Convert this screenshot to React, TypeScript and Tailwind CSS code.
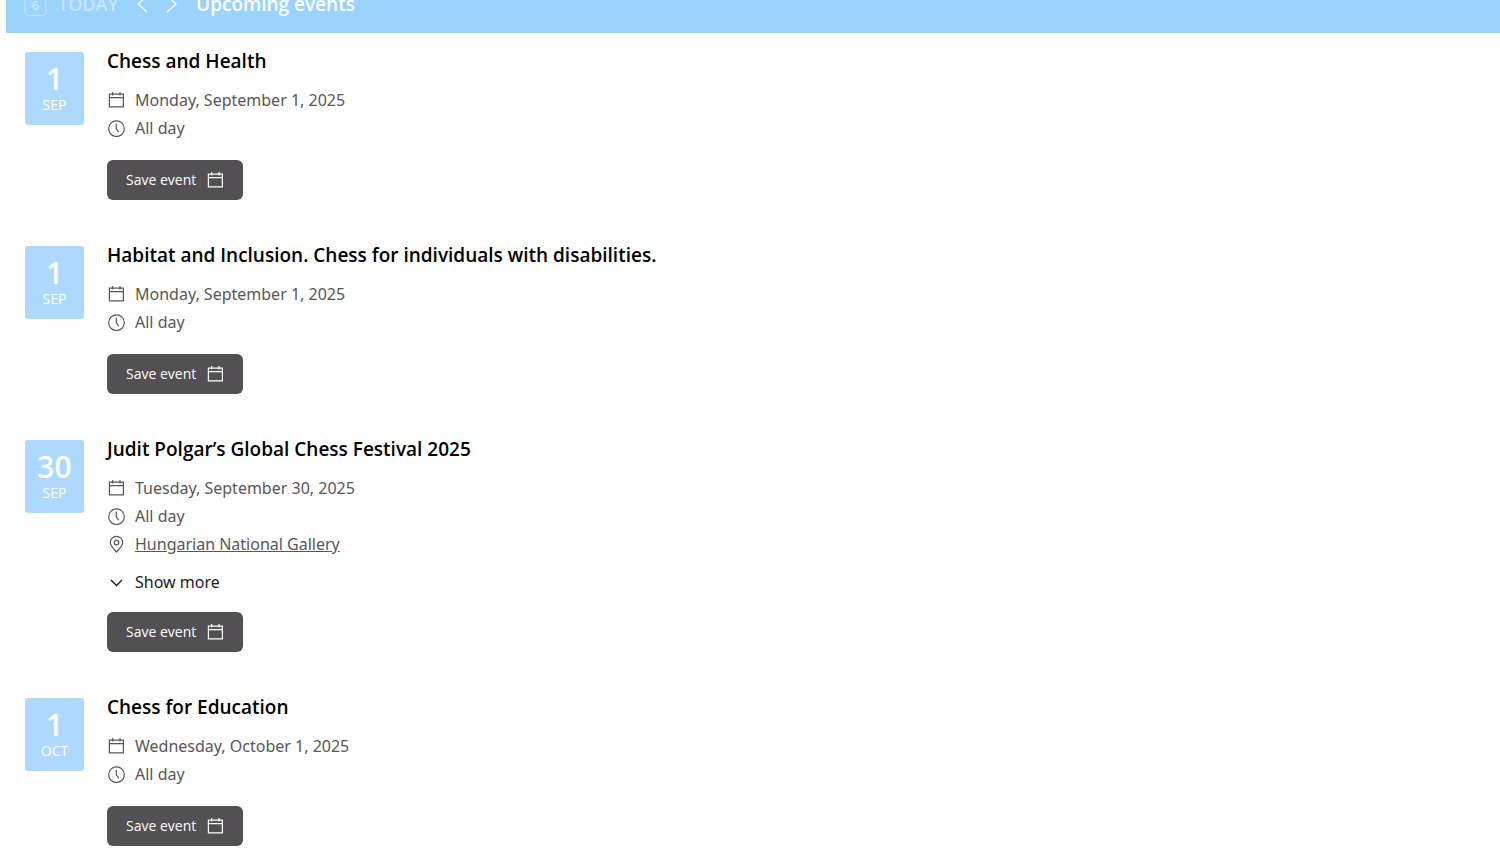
import React from 'react';

type EventItem = {
  day: string;
  month: string;
  title: string;
  date: string;
  time: string;
  place?: string;
};

const events: EventItem[] = [
  { day: '1', month: 'SEP', title: 'Chess and Health', date: 'Monday, September 1, 2025', time: 'All day' },
  {
    day: '1',
    month: 'SEP',
    title: 'Habitat and Inclusion. Chess for individuals with disabilities.',
    date: 'Monday, September 1, 2025',
    time: 'All day',
  },
  {
    day: '30',
    month: 'SEP',
    title: 'Judit Polgar’s Global Chess Festival 2025',
    date: 'Tuesday, September 30, 2025',
    time: 'All day',
    place: 'Hungarian National Gallery',
  },
  { day: '1', month: 'OCT', title: 'Chess for Education', date: 'Wednesday, October 1, 2025', time: 'All day' },
];

function Icon({ children }: { children: React.ReactNode }) {
  return (
    <svg
      className="size-[18px] shrink-0"
      viewBox="0 0 18 18"
      fill="none"
      stroke="currentColor"
      strokeWidth="1.2"
      aria-hidden="true"
    >
      {children}
    </svg>
  );
}

function CalendarIcon() {
  return (
    <Icon>
      <path d="M2.400 3.200h14v12.600h-14zM2.400 6.700h14M5.700 1v3.500M13 1v3.500" />
    </Icon>
  );
}

function ClockIcon() {
  return (
    <Icon>
      <circle cx="9.500" cy="9.700" r="7.800" />
      <path d="M9.300 4.800v5l2.400 3.300" />
    </Icon>
  );
}

function PinIcon() {
  return (
    <Icon>
      <path d="M9.500 17C6.800 13.800 3.300 10.900 3.300 7.500a6.200 6.200 0 0 1 12.400 0C15.700 10.900 12.200 13.800 9.500 17z" />
      <circle cx="9.500" cy="7.500" r="2.300" />
    </Icon>
  );
}

function ChevronDownIcon() {
  return (
    <Icon>
      <path d="M4 7l5.500 5.500L15 7" strokeWidth="1.400" />
    </Icon>
  );
}

function Header() {
  return (
    <header className="-mt-[26px] flex h-[59px] items-center bg-[#9bd3ff] pl-[18px] text-white">
      <button type="button" className="flex items-center gap-[10px] opacity-45">
        <svg className="size-6" viewBox="0 0 24 24" fill="none" stroke="currentColor" aria-hidden="true">
          <rect x="1" y="2.500" width="21" height="21" rx="4" />
          <text x="11.500" y="17.500" textAnchor="middle" fontSize="13" fontWeight="600" fill="currentColor" stroke="none">
            6
          </text>
        </svg>
        <span className="text-lg leading-6 font-semibold">TODAY</span>
      </button>
      <nav className="ml-[14px] flex gap-2">
        <button type="button" aria-label="Previous">
          <svg className="h-5 w-5" viewBox="0 0 20 20" fill="none" stroke="currentColor" strokeWidth="1.300" aria-hidden="true">
            <path d="M15 2L6 10l9 8" />
          </svg>
        </button>
        <button type="button" aria-label="Next">
          <svg className="h-5 w-5" viewBox="0 0 20 20" fill="none" stroke="currentColor" strokeWidth="1.300" aria-hidden="true">
            <path d="M7 2l9 8-9 8" />
          </svg>
        </button>
      </nav>
      <h1 className="ml-4 text-[19px] leading-6 font-semibold">Upcoming events</h1>
    </header>
  );
}

function EventCard({ event }: { event: EventItem }) {
  return (
    <li className="flex items-start gap-[23px]">
      <div className="mt-[5px] flex h-[73px] w-[59px] shrink-0 flex-col items-center rounded-[3px] bg-[#add9ff] pt-[9px] text-white">
        <span className="text-[30px] leading-9 font-semibold">{event.day}</span>
        <span className="text-sm leading-4">{event.month}</span>
      </div>
      <div className="flex min-w-0 flex-col items-start">
        <h2 className="text-[19px] leading-7 font-semibold text-black">{event.title}</h2>
        <div className="mt-[11px] font-['Noto_Sans',sans-serif] text-base leading-7 text-[#58565a]">
          <p className="flex items-center gap-[10px]">
            <CalendarIcon />
            {event.date}
          </p>
          <p className="flex items-center gap-[10px]">
            <ClockIcon />
            {event.time}
          </p>
          {event.place && (
            <p className="flex items-center gap-[10px]">
              <PinIcon />
              <a href="#gallery" className="underline">
                {event.place}
              </a>
            </p>
          )}
        </div>
        {event.place && (
          <button
            type="button"
            className="mt-[10px] -mb-[2px] flex items-center gap-[10px] font-['Noto_Sans',sans-serif] text-base leading-7 text-[#1c1b1e]"
          >
            <ChevronDownIcon />
            Show more
          </button>
        )}
        <button
          type="button"
          className="mt-[18px] flex h-10 items-center gap-[10px] rounded-md bg-[#525053] px-[19px] text-sm text-white"
        >
          Save event
          <CalendarIcon />
        </button>
      </div>
    </li>
  );
}

export default function App() {
  return (
    <main className="overflow-hidden bg-[#fefefe] pl-[6px] font-['Open_Sans',sans-serif]">
      <Header />
      <ul className="flex flex-col gap-[41px] pt-[14px] pr-5 pb-1 pl-[19px]">
        {events.map((event) => (
          <EventCard key={event.title} event={event} />
        ))}
      </ul>
    </main>
  );
}
